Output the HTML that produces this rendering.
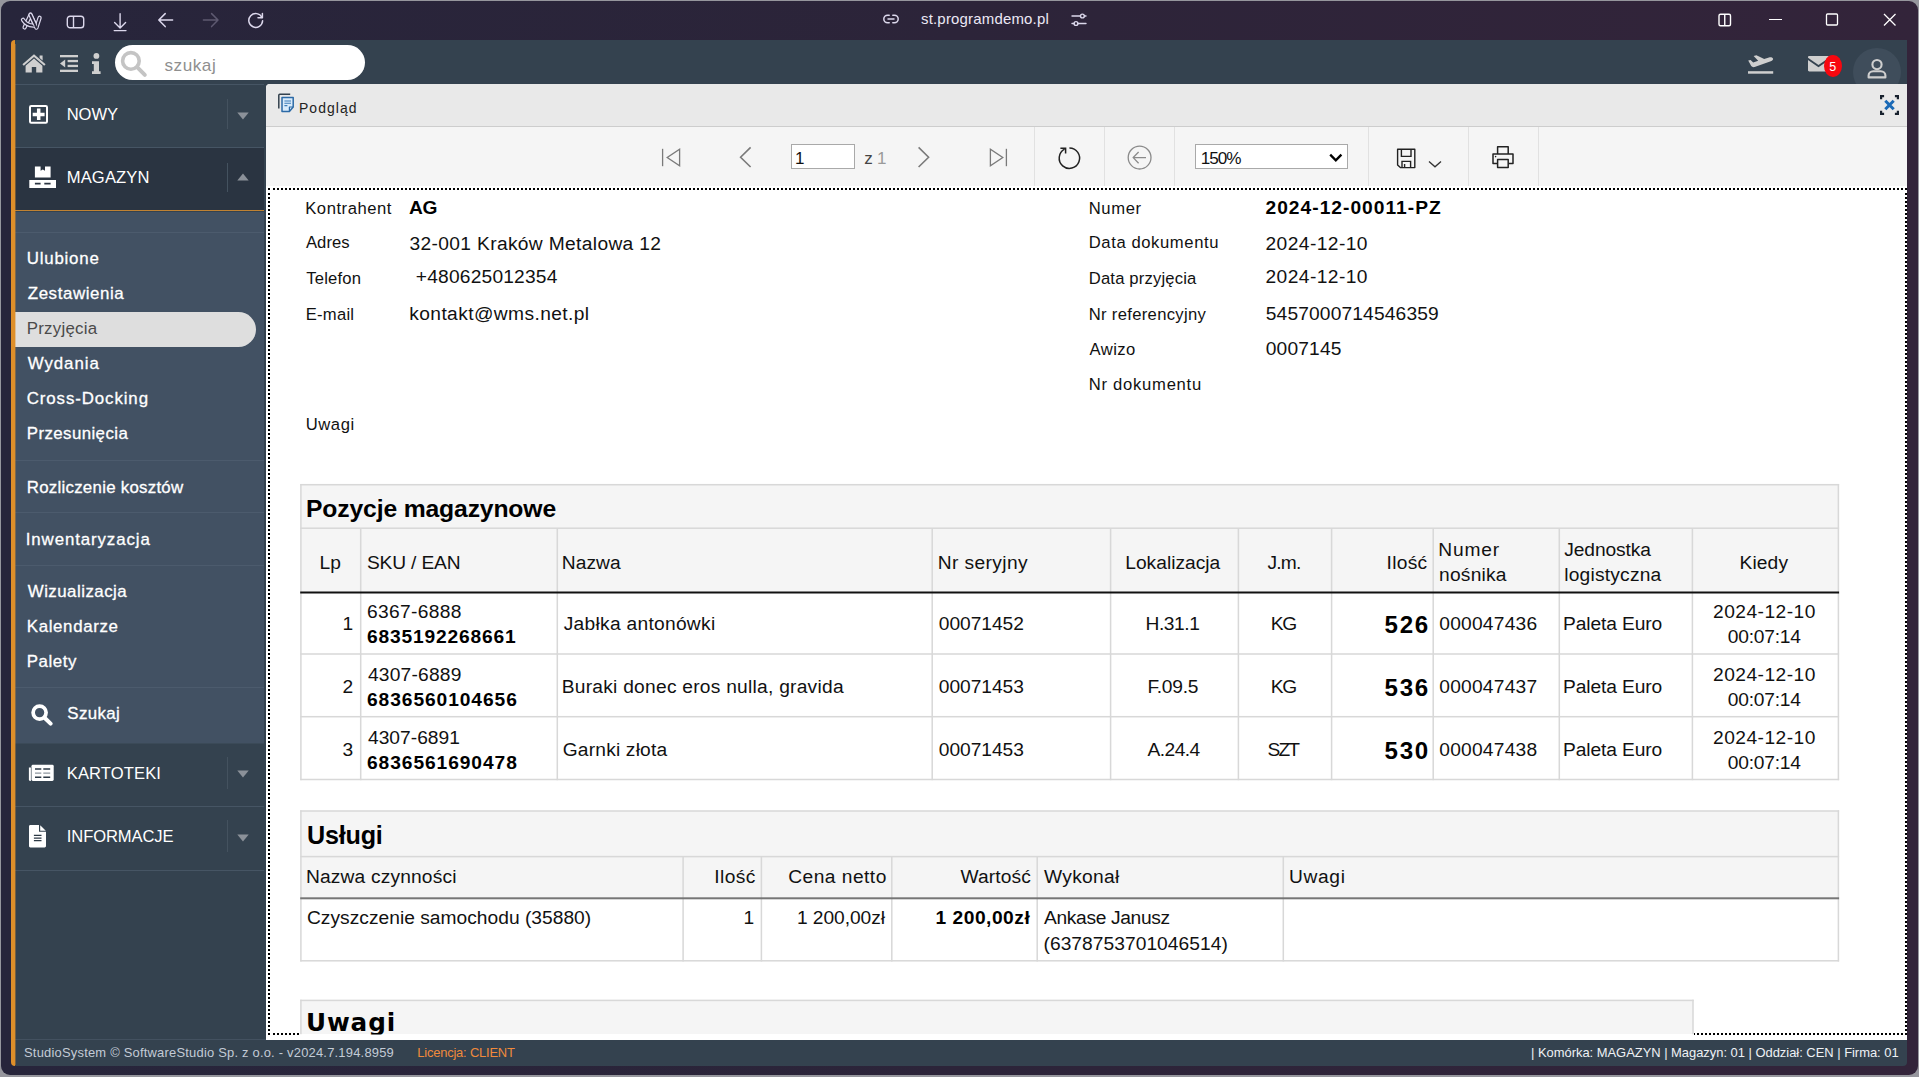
<!DOCTYPE html>
<html lang="pl"><head><meta charset="utf-8"><title>StudioSystem - Podgląd</title>
<style>
html,body{margin:0;padding:0;}
body{width:1919px;height:1077px;position:relative;overflow:hidden;background:#96969d;font-family:'Liberation Sans', sans-serif;}
body>div,body>span,body>svg{position:absolute;}
body>span{white-space:pre;line-height:1;color:#000;}

</style></head><body>
<div style="left:1px;top:1px;width:1917px;height:1074.4px;background:linear-gradient(90deg,#27253b 0%,#2c2439 50%,#33243a 100%);border-radius:9px;"></div>
<div style="left:11px;top:40px;width:1896px;height:1026px;background:#34424f;border-radius:5px 0 4px 5px;overflow:hidden;"></div>
<div style="left:11px;top:40px;width:4px;height:1026px;background:#de8f2a;border-radius:5px 0 0 5px;"></div>
<svg style="left:18px;top:10px;" width="26" height="23" viewBox="0 0 26 23"><g fill="none" stroke-linecap="round" stroke-linejoin="round"><path d="M6.6 17.4 L12.5 4.8 L18.4 17.6 L21.6 7.8" stroke="#dcd8ec" stroke-width="4.3"/><path d="M6.6 17.4 L12.5 4.8 L18.4 17.6 L21.6 7.8" stroke="#28253a" stroke-width="1.9"/><path d="M5 9.8 Q9 16.2 17 15.4" stroke="#dcd8ec" stroke-width="4.3"/><path d="M5 9.8 Q9 16.2 17 15.4" stroke="#28253a" stroke-width="1.9"/><path d="M12.5 4.8 L16.6 13.8" stroke="#dcd8ec" stroke-width="4.3"/><path d="M12.5 4.8 L18.4 17.6" stroke="#28253a" stroke-width="1.9"/></g></svg>
<svg style="left:65px;top:13px;" width="22" height="18" viewBox="0 0 22 18"><g fill="none" stroke="#dcd8ec" stroke-width="1.4"><rect x="2.3" y="3.2" width="16.4" height="11.6" rx="2.8"/><path d="M8.5 3.2v11.6"/></g></svg>
<svg style="left:112px;top:11px;" width="16" height="22" viewBox="0 0 16 22"><g fill="none" stroke="#dcd8ec" stroke-width="1.4" stroke-linecap="round" stroke-linejoin="round"><path d="M8.1 2.8v13.6M2.6 11.6l5.5 5.5 5.5-5.5"/><path d="M2.2 19.6h11.8"/></g></svg>
<svg style="left:156px;top:11px;" width="20" height="18" viewBox="0 0 20 18"><g fill="none" stroke="#dcd8ec" stroke-width="1.5" stroke-linecap="round" stroke-linejoin="round"><path d="M3 9h13.6M9.2 2.6L2.8 9l6.4 6.6"/></g></svg>
<svg style="left:201px;top:11px;" width="20" height="18" viewBox="0 0 20 18"><g fill="none" stroke="#5d5970" stroke-width="1.5" stroke-linecap="round" stroke-linejoin="round"><path d="M2.4 9h14M10.6 2.6L17 9l-6.4 6.6"/></g></svg>
<svg style="left:246px;top:11px;" width="20" height="20" viewBox="0 0 20 20"><g fill="none" stroke="#dcd8ec" stroke-width="1.5" stroke-linecap="round" stroke-linejoin="round"><path d="M15.9 6.4A6.9 6.9 0 1 0 16.6 9.8"/><path d="M16.4 2.4v4.4H12"/></g></svg>
<svg style="left:882px;top:12px;" width="18" height="14" viewBox="0 0 18 14"><g fill="none" stroke="#dcd8ec" stroke-width="1.5" stroke-linecap="round"><path d="M7.2 3.2H5.6a3.8 3.8 0 0 0 0 7.6h1.6M10.8 3.2h1.6a3.8 3.8 0 0 1 0 7.6h-1.6M6 7h6"/></g></svg>
<span style="left:921.00px;top:12px;font-size:14.97px;letter-spacing:0.188px;color:#ebe8f5;">st.programdemo.pl</span>
<svg style="left:1070px;top:11px;" width="18" height="18" viewBox="0 0 18 18"><g fill="none" stroke="#dcd8ec" stroke-width="1.4" stroke-linecap="round"><path d="M2 5h8.5M14.5 5H16M2 12.5h2M8 12.5h8"/><circle cx="12.4" cy="5" r="1.9"/><circle cx="6" cy="12.5" r="1.9"/></g></svg>
<svg style="left:1717px;top:12px;" width="16" height="16" viewBox="0 0 16 16"><g fill="none" stroke="#fff" stroke-width="1.4"><rect x="2" y="2.2" width="11.5" height="11.5" rx="1.5"/><path d="M7.75 2.2v11.5"/></g></svg>
<div style="left:1769px;top:19px;width:13px;height:1.3px;background:#fff;"></div>
<svg style="left:1824px;top:12px;" width="16" height="16" viewBox="0 0 16 16"><rect x="2.5" y="2" width="11" height="11" rx="1" fill="none" stroke="#fff" stroke-width="1.3"/></svg>
<svg style="left:1882px;top:12px;" width="16" height="16" viewBox="0 0 16 16"><path d="M2 2l11.5 11.5M13.5 2L2 13.5" fill="none" stroke="#fff" stroke-width="1.3"/></svg>
<svg style="left:21px;top:52px;" width="26" height="22" viewBox="0 0 26 22"><g fill="#cfcfcf"><path d="M13 2.2 L24.6 12.2 L23.2 13.8 L13 5 L2.8 13.8 L1.4 12.2 Z"/><path d="M18.6 3.4h3v5.2l-3-2.6z"/><path d="M13 6.6 L21.4 13.8 V20.6 H15.2 V15 H10.8 V20.6 H4.6 V13.8 Z"/></g></svg>
<svg style="left:59px;top:54px;" width="20" height="19" viewBox="0 0 20 19"><g fill="#cfcfcf"><rect x="1" y="1" width="18" height="2.3"/><rect x="8.6" y="5.9" width="10.4" height="2.3"/><rect x="8.6" y="10.8" width="10.4" height="2.3"/><rect x="1" y="15.7" width="18" height="2.3"/><path d="M6.2 5.4v8.2L1 9.5z"/></g></svg>
<svg style="left:91px;top:52px;" width="10" height="23" viewBox="0 0 10 23"><g fill="#cfcfcf"><circle cx="5.4" cy="3.9" r="2.9"/><path d="M1 9.2h7v10h1.6v2.8H1v-2.8h1.8V12H1z"/></g></svg>
<div style="left:115px;top:45px;width:250px;height:35px;background:#fff;border-radius:17.5px;"></div>
<svg style="left:120px;top:50px;" width="30" height="30" viewBox="0 0 30 30"><g fill="none" stroke="#c4c4c4"><circle cx="10.9" cy="10.9" r="8.3" stroke-width="3.6"/><path d="M17.4 17.4l7.4 7.4" stroke-width="4" stroke-linecap="round"/></g></svg>
<span style="left:164.50px;top:57px;font-size:17.15px;letter-spacing:0.520px;color:#8f8f8f;">szukaj</span>
<svg style="left:1746px;top:53px;" width="30" height="24" viewBox="0 0 30 24"><g fill="#cfcfcf"><path d="M2.2 7.6 L4.6 6.9 L7.2 9.4 L12.2 7.8 L7.6 3 L10.4 2.2 L18.2 6 L23 4.4 C24.6 3.9 26.4 4.3 27 5.4 C27.5 6.4 26.4 7.6 24.8 8.2 L8.6 14 C7.2 14.4 6 14 5.2 13 Z"/><rect x="2" y="18.2" width="25.2" height="2.5"/></g></svg>
<svg style="left:1807px;top:55px;" width="24" height="18" viewBox="0 0 24 18"><g fill="#cfcfcf"><path d="M1 2.2C1 1.5 1.6 1 2.3 1h18.4c.7 0 1.3.5 1.3 1.2v.6L11.5 10 1 2.8z"/><path d="M1 5l10.5 7.2L22 5v10.3c0 .7-.6 1.2-1.3 1.2H2.3c-.7 0-1.3-.5-1.3-1.2z"/></g></svg>
<div style="left:1824.4px;top:55px;width:17.6px;height:22.2px;background:#f8070f;border-radius:8.8px/11.1px;"></div>
<span style="left:1829.25px;top:61px;font-size:12.5px;color:#fff;">5</span>
<div style="left:1853px;top:48px;width:48px;height:48px;background:#3f4d5b;border-radius:24px;clip-path:inset(0 0 12px 0);"></div>
<svg style="left:1865px;top:57px;" width="24" height="24" viewBox="0 0 24 24"><g fill="none" stroke="#cfcfcf" stroke-width="2.1"><circle cx="12" cy="7.6" r="4.6"/><path d="M3.6 20.4v-1.8c0-2.6 2-4.4 4.6-4.4h7.6c2.6 0 4.6 1.8 4.6 4.4v1.8z" stroke-linejoin="round"/></g></svg>
<div style="left:15px;top:84.3px;width:249.3px;height:1px;background:#465564;"></div>
<div style="left:15px;top:147px;width:249.3px;height:1px;background:#465564;"></div>
<div style="left:15px;top:148px;width:249.3px;height:62.5px;background:#2a3441;"></div>
<div style="left:15px;top:210px;width:249.3px;height:1.2px;background:#c08233;"></div>
<div style="left:15px;top:211.6px;width:249.3px;height:531.6px;background:#425163;"></div>
<div style="left:15px;top:231.5px;width:249.3px;height:1.2px;background:#4c5b6d;"></div>
<div style="left:15px;top:459.5px;width:249.3px;height:1.2px;background:#4c5b6d;"></div>
<div style="left:15px;top:511.5px;width:249.3px;height:1.2px;background:#4c5b6d;"></div>
<div style="left:15px;top:564.5px;width:249.3px;height:1.2px;background:#4c5b6d;"></div>
<div style="left:15px;top:686.5px;width:249.3px;height:1.2px;background:#4c5b6d;"></div>
<div style="left:15px;top:743.2px;width:249.3px;height:1px;background:#3b4a58;"></div>
<div style="left:15px;top:806.4px;width:249.3px;height:1px;background:#465564;"></div>
<div style="left:15px;top:869.6px;width:249.3px;height:1px;background:#465564;"></div>
<div style="left:227.3px;top:98.5px;width:1px;height:30.0px;background:#44525f;"></div>
<div style="left:227.3px;top:162.5px;width:1px;height:29.5px;background:#44525f;"></div>
<div style="left:227.3px;top:757px;width:1px;height:32px;background:#44525f;"></div>
<div style="left:227.3px;top:820px;width:1px;height:32px;background:#44525f;"></div>
<svg style="left:236.5px;top:111.6px;" width="12" height="8" viewBox="0 0 12 8"><path d="M0.3 0.4h11.4L6 7.6z" fill="#8b9199"/></svg>
<svg style="left:236.5px;top:172.7px;" width="12" height="8" viewBox="0 0 12 8"><path d="M0.3 7.6h11.4L6 0.4z" fill="#8b9199"/></svg>
<svg style="left:236.5px;top:770.4px;" width="12" height="8" viewBox="0 0 12 8"><path d="M0.3 0.4h11.4L6 7.6z" fill="#8b9199"/></svg>
<svg style="left:236.5px;top:833.6px;" width="12" height="8" viewBox="0 0 12 8"><path d="M0.3 0.4h11.4L6 7.6z" fill="#8b9199"/></svg>
<svg style="left:28px;top:104px;" width="22" height="21" viewBox="0 0 22 21"><g fill="none" stroke="#fff"><rect x="2" y="2" width="17" height="16.8" rx="1.2" stroke-width="2"/><path d="M10.7 4.5v11.4M4.7 10.4h11.9" stroke-width="3.5"/></g></svg>
<span style="left:66.75px;top:107px;font-size:16.57px;letter-spacing:-0.100px;color:#fff;">NOWY</span>
<svg style="left:28px;top:164px;" width="29" height="25" viewBox="0 0 29 25"><g fill="#fff"><path d="M6.9 2.5h5.7v4.2l2.2-1.2 2.2 1.2V2.5h5.6v11.1H6.9z"/><path d="M1.3 16h26.7v7.9H1.3zM6.9 18.7v1.9h5.7v-1.9zM16.3 18.7v1.9h6.3v-1.9z" fill-rule="evenodd"/></g></svg>
<span style="left:66.75px;top:170px;font-size:16.57px;letter-spacing:0.133px;color:#fff;">MAGAZYN</span>
<span style="left:26.75px;top:251px;font-size:16.86px;letter-spacing:0.786px;color:#fff;-webkit-text-stroke:0.3px #fff;">Ulubione</span>
<span style="left:27.75px;top:286px;font-size:16.86px;letter-spacing:0.600px;color:#fff;-webkit-text-stroke:0.3px #fff;">Zestawienia</span>
<div style="left:15px;top:311.8px;width:241px;height:35px;background:#dedede;border-radius:0 17.5px 17.5px 0;"></div>
<span style="left:26.75px;top:321px;font-size:16.86px;letter-spacing:0.250px;color:#4a4a4a;">Przyjęcia</span>
<span style="left:27.75px;top:356px;font-size:16.86px;letter-spacing:0.933px;color:#fff;-webkit-text-stroke:0.3px #fff;">Wydania</span>
<span style="left:26.75px;top:391px;font-size:16.86px;letter-spacing:0.892px;color:#fff;-webkit-text-stroke:0.3px #fff;">Cross-Docking</span>
<span style="left:26.75px;top:426px;font-size:16.86px;letter-spacing:0.409px;color:#fff;-webkit-text-stroke:0.3px #fff;">Przesunięcia</span>
<span style="left:26.75px;top:480px;font-size:16.86px;letter-spacing:0.256px;color:#fff;-webkit-text-stroke:0.3px #fff;">Rozliczenie kosztów</span>
<span style="left:25.75px;top:532px;font-size:16.86px;letter-spacing:0.892px;color:#fff;-webkit-text-stroke:0.3px #fff;">Inwentaryzacja</span>
<span style="left:27.75px;top:584px;font-size:16.86px;letter-spacing:0.473px;color:#fff;-webkit-text-stroke:0.3px #fff;">Wizualizacja</span>
<span style="left:26.75px;top:619px;font-size:16.86px;letter-spacing:0.656px;color:#fff;-webkit-text-stroke:0.3px #fff;">Kalendarze</span>
<span style="left:26.75px;top:654px;font-size:16.86px;letter-spacing:0.580px;color:#fff;-webkit-text-stroke:0.3px #fff;">Palety</span>
<svg style="left:30px;top:703px;" width="24" height="23" viewBox="0 0 24 23"><g fill="none" stroke="#fff"><circle cx="9.6" cy="9.6" r="6.5" stroke-width="3.7"/><path d="M14.8 15l5.8 5.6" stroke-width="4" stroke-linecap="round"/></g></svg>
<span style="left:67.25px;top:706px;font-size:16.86px;letter-spacing:0.400px;color:#fff;-webkit-text-stroke:0.3px #fff;">Szukaj</span>
<svg style="left:28px;top:764px;" width="27" height="18" viewBox="0 0 27 18"><g fill="#fff"><path d="M0.9 3.4h2v13.6H2.5A1.6 1.6 0 0 1 .9 15.4z"/><rect x="3.5" y="0.8" width="22.2" height="16.2" rx="1.4"/></g><g fill="none"><path d="M7 5h6.3M15.3 5h6.9M7 13.3h6.3M15.3 13.3h6.9" stroke="#2c3945" stroke-width="1.5"/><path d="M7 9.1h6.3M15.3 9.1h6.9" stroke="#8d969f" stroke-width="1.3"/></g></svg>
<span style="left:66.75px;top:766px;font-size:16.57px;letter-spacing:0.113px;color:#fff;">KARTOTEKI</span>
<svg style="left:28px;top:824px;" width="20" height="24" viewBox="0 0 20 24"><g fill="#fff"><path d="M1 2.5C1 1.7 1.6 1.1 2.4 1.1h8.6v6.6h7v14.3c0 .8-.6 1.4-1.4 1.4H2.4c-.8 0-1.4-.6-1.4-1.4z"/><path d="M12.2 1.3l5.6 5.4h-5.6z"/></g><g stroke="#2c3945" stroke-width="1.3"><path d="M5.9 11.3h7.6M5.9 14.1h7.6M5.9 16.7h7.6"/></g></svg>
<span style="left:66.75px;top:829px;font-size:16.57px;letter-spacing:-0.089px;color:#fff;">INFORMACJE</span>
<span style="left:24.00px;top:1047px;font-size:12.94px;letter-spacing:0.210px;color:#c3cbd6;">StudioSystem © SoftwareStudio Sp. z o.o. - v2024.7.194.8959</span>
<span style="left:417.25px;top:1047px;font-size:12.94px;letter-spacing:-0.200px;color:#f08a3c;">Licencja: CLIENT</span>
<span style="left:1531.00px;top:1047px;font-size:12.94px;letter-spacing:-0.017px;color:#eef1f5;">| Komórka: MAGAZYN | Magazyn: 01 | Oddział: CEN | Firma: 01</span>
<div style="left:15px;top:1039.3px;width:1892px;height:1px;background:#435160;"></div>
<div style="left:266.3px;top:84.3px;width:1640.7px;height:955.5px;background:#fff;border-radius:4px 0 0 0;overflow:hidden;"></div>
<div style="left:266.3px;top:84.3px;width:1640.7px;height:41.5px;background:#e9e9e9;border-radius:4px 0 0 0;"></div>
<div style="left:266.3px;top:125.6px;width:1640.7px;height:1.5px;background:#cdcdcd;"></div>
<div style="left:266.3px;top:127.1px;width:1640.7px;height:59.4px;background:#f5f5f5;"></div>
<svg style="left:276px;top:92px;" width="20" height="22" viewBox="0 0 20 22"><g fill="none" stroke-linejoin="round"><path d="M2.8 16.6V3.2c0-.6.4-1 1-1h10.4" stroke="#33414e" stroke-width="1.5"/><path d="M6 5.6h11.2v9.4l-3.8 4.4H6z" fill="#d9ebfb" stroke="#2c6aa6" stroke-width="1.5"/><path d="M17.2 15h-3.8v4.4" stroke="#2c6aa6" stroke-width="1.2"/><path d="M8.4 9h6.6M8.4 11.2h6.6M8.4 13.6h3" stroke="#3f7db8" stroke-width="1.1"/></g></svg>
<span style="left:299.00px;top:102px;font-size:13.95px;letter-spacing:1.067px;color:#222;">Podgląd</span>
<svg style="left:1879px;top:94px;" width="22" height="22" viewBox="0 0 22 22"><g fill="none" stroke="#17212d" stroke-width="2.2"><path d="M2.1 5.2v-3h3M15.9 2.2h3v3M18.9 16.8v3h-3M5.1 19.8h-3v-3"/></g><path d="M6.3 6.8l8.4 8.4M14.7 6.8l-8.4 8.4" stroke="#1a69b6" stroke-width="3" fill="none"/></svg>
<div style="left:1033.8px;top:127.1px;width:1px;height:59.4px;background:#e1e1e1;"></div>
<div style="left:1103.8px;top:127.1px;width:1px;height:59.4px;background:#e1e1e1;"></div>
<div style="left:1173.8px;top:127.1px;width:1px;height:59.4px;background:#e1e1e1;"></div>
<div style="left:1367.7px;top:127.1px;width:1px;height:59.4px;background:#e1e1e1;"></div>
<div style="left:1467.5px;top:127.1px;width:1px;height:59.4px;background:#e1e1e1;"></div>
<div style="left:1537.5px;top:127.1px;width:1px;height:59.4px;background:#e1e1e1;"></div>
<svg style="left:660px;top:146px;" width="24" height="24" viewBox="0 0 24 24"><g fill="none" stroke="#7a7a7a" stroke-width="1.3"><path d="M2.6 2.8v17.4"/><path d="M19.6 3.2v16.6L7.2 11.5z" stroke-linejoin="miter"/></g></svg>
<svg style="left:736px;top:145px;" width="18" height="24" viewBox="0 0 18 24"><path d="M14.6 2.4L4.6 12.2l10 9.8" fill="none" stroke="#7a7a7a" stroke-width="1.6"/></svg>
<div style="left:791px;top:144.3px;width:63.5px;height:25.2px;box-sizing:border-box;background:#fff;border:1px solid #a9a9a9;"></div>
<span style="left:795.00px;top:150px;font-size:17.01px;color:#111;">1</span>
<span style="left:864.25px;top:150px;font-size:17.01px;color:#444;">z</span>
<span style="left:877.00px;top:150px;font-size:17.01px;color:#9a9a9a;">1</span>
<svg style="left:915px;top:145px;" width="18" height="24" viewBox="0 0 18 24"><path d="M3.6 2.4l10 9.8-10 9.8" fill="none" stroke="#7a7a7a" stroke-width="1.6"/></svg>
<svg style="left:987px;top:146px;" width="24" height="24" viewBox="0 0 24 24"><g fill="none" stroke="#7a7a7a" stroke-width="1.3"><path d="M19.4 2.8v17.4"/><path d="M3.4 3.2v16.6l12.4-8.3z"/></g></svg>
<svg style="left:1055px;top:144px;" width="28" height="28" viewBox="0 0 28 28"><g fill="none" stroke="#222" stroke-width="1.5"><path d="M9.6 5.2A10.2 10.2 0 1 0 14.4 4"/><path d="M5.4 4.2h5.2v5.2" stroke-linejoin="miter"/></g></svg>
<svg style="left:1126px;top:144px;" width="28" height="28" viewBox="0 0 28 28"><g fill="none" stroke="#8a8a8a" stroke-width="1.3"><circle cx="13.6" cy="13.6" r="11.4"/><path d="M20 13.6H7.6M12.6 8l-5.4 5.6 5.4 5.6"/></g></svg>
<div style="left:1195px;top:144.3px;width:152.6px;height:25.2px;box-sizing:border-box;background:#fff;border:1px solid #a9a9a9;"></div>
<span style="left:1200.75px;top:150px;font-size:17.15px;letter-spacing:-1.000px;color:#111;">150%</span>
<svg style="left:1328px;top:152px;" width="16" height="12" viewBox="0 0 16 12"><path d="M2.2 2.6l5.6 5.8 5.6-5.8" fill="none" stroke="#000" stroke-width="2.3"/></svg>
<svg style="left:1395px;top:147px;" width="24" height="23" viewBox="0 0 24 23"><g fill="none" stroke="#222" stroke-width="1.4"><path d="M2.6 2.2h17.2v18.4H5.4L2.6 18z" stroke-linejoin="round"/><path d="M6.4 2.4v7h9.6v-7"/><path d="M7 20.4v-6h8.6v6M9.6 20.4v-3.4"/></g></svg>
<svg style="left:1427px;top:159px;" width="16" height="10" viewBox="0 0 16 10"><path d="M2 2.4l6 5.4 6-5.4" fill="none" stroke="#333" stroke-width="1.3"/></svg>
<svg style="left:1490px;top:144px;" width="26" height="26" viewBox="0 0 26 26"><g fill="none" stroke="#222" stroke-width="1.5" stroke-linejoin="round"><path d="M7.6 10V2.8h10.6V10"/><path d="M7.4 19.4H3V10h20v9.4h-4.6"/><path d="M7.6 15.4h10.6v8H7.6z"/></g><circle cx="5.6" cy="12.6" r="0.8" fill="#222"/></svg>
<div style="left:268px;top:188px;width:1639px;height:847px;box-sizing:border-box;border:2px dotted #000;background:#fff;"></div>
<span style="left:305.25px;top:201px;font-size:16.64px;letter-spacing:0.533px;color:#111;">Kontrahent</span>
<span style="left:306.00px;top:235px;font-size:16.64px;letter-spacing:0.025px;color:#111;">Adres</span>
<span style="left:306.25px;top:271px;font-size:16.64px;letter-spacing:0.200px;color:#111;">Telefon</span>
<span style="left:305.75px;top:307px;font-size:16.64px;letter-spacing:0.240px;color:#111;">E-mail</span>
<span style="left:305.75px;top:417px;font-size:16.64px;letter-spacing:0.550px;color:#111;">Uwagi</span>
<span style="left:409.00px;top:198px;font-size:19.19px;letter-spacing:-0.300px;font-weight:700;">AG</span>
<span style="left:409.50px;top:234px;font-size:19.19px;letter-spacing:0.346px;color:#111;">32-001 Kraków Metalowa 12</span>
<span style="left:415.75px;top:267px;font-size:19.19px;letter-spacing:0.200px;color:#111;">+480625012354</span>
<span style="left:409.25px;top:304px;font-size:19.19px;letter-spacing:0.400px;color:#111;">kontakt@wms.net.pl</span>
<span style="left:1088.75px;top:201px;font-size:16.64px;letter-spacing:0.600px;color:#111;">Numer</span>
<span style="left:1088.75px;top:235px;font-size:16.64px;letter-spacing:0.592px;color:#111;">Data dokumentu</span>
<span style="left:1088.75px;top:271px;font-size:16.64px;letter-spacing:0.169px;color:#111;">Data przyjęcia</span>
<span style="left:1088.75px;top:307px;font-size:16.64px;letter-spacing:0.314px;color:#111;">Nr referencyjny</span>
<span style="left:1089.50px;top:342px;font-size:16.64px;letter-spacing:0.425px;color:#111;">Awizo</span>
<span style="left:1088.75px;top:377px;font-size:16.64px;letter-spacing:0.727px;color:#111;">Nr dokumentu</span>
<span style="left:1265.50px;top:198px;font-size:19.19px;letter-spacing:1.013px;font-weight:700;">2024-12-00011-PZ</span>
<span style="left:1265.50px;top:234px;font-size:19.19px;letter-spacing:0.433px;color:#111;">2024-12-10</span>
<span style="left:1265.50px;top:267px;font-size:19.19px;letter-spacing:0.433px;color:#111;">2024-12-10</span>
<span style="left:1265.75px;top:304px;font-size:19.19px;letter-spacing:0.147px;color:#111;">5457000714546359</span>
<span style="left:1265.75px;top:339px;font-size:19.19px;letter-spacing:0.167px;color:#111;">0007145</span>
<div style="left:300.9px;top:484.5px;width:1537.5px;height:108px;background:#f5f5f5;"></div>
<span style="left:306.00px;top:497px;font-size:24.71px;letter-spacing:-0.147px;font-weight:700;">Pozycje magazynowe</span>
<span style="left:319.50px;top:553px;font-size:19.19px;color:#111;">Lp</span>
<span style="left:367.00px;top:553px;font-size:19.19px;letter-spacing:-0.175px;color:#111;">SKU / EAN</span>
<span style="left:561.75px;top:553px;font-size:19.19px;letter-spacing:0.050px;color:#111;">Nazwa</span>
<span style="left:937.75px;top:553px;font-size:19.19px;letter-spacing:0.389px;color:#111;">Nr seryjny</span>
<span style="left:1125.25px;top:553px;font-size:19.19px;letter-spacing:0.010px;color:#111;">Lokalizacja</span>
<span style="left:1267.50px;top:553px;font-size:19.19px;letter-spacing:-0.800px;color:#111;">J.m.</span>
<span style="left:1386.50px;top:553px;font-size:19.19px;letter-spacing:0.300px;color:#111;">Ilość</span>
<span style="left:1438.25px;top:540px;font-size:19.19px;letter-spacing:0.800px;color:#111;">Numer</span>
<span style="left:1439.00px;top:565px;font-size:19.19px;letter-spacing:0.233px;color:#111;">nośnika</span>
<span style="left:1564.25px;top:540px;font-size:19.19px;letter-spacing:-0.088px;color:#111;">Jednostka</span>
<span style="left:1564.25px;top:565px;font-size:19.19px;letter-spacing:0.210px;color:#111;">logistyczna</span>
<span style="left:1739.50px;top:553px;font-size:19.19px;letter-spacing:0.125px;color:#111;">Kiedy</span>
<span style="left:342.50px;top:614px;font-size:19.19px;color:#111;">1</span>
<span style="left:367.00px;top:602px;font-size:19.19px;letter-spacing:0.325px;color:#111;">6367-6888</span>
<span style="left:367.00px;top:627px;font-size:19.19px;letter-spacing:0.825px;font-weight:700;">6835192268661</span>
<span style="left:563.75px;top:614px;font-size:19.19px;letter-spacing:0.280px;color:#111;">Jabłka antonówki</span>
<span style="left:938.75px;top:614px;font-size:19.19px;letter-spacing:-0.029px;color:#111;">00071452</span>
<span style="left:1145.50px;top:614px;font-size:19.19px;letter-spacing:-0.420px;color:#111;">H.31.1</span>
<span style="left:1270.75px;top:614px;font-size:19.19px;letter-spacing:-1.300px;color:#111;">KG</span>
<span style="left:1384.50px;top:613px;font-size:24.13px;letter-spacing:1.750px;font-weight:700;">526</span>
<span style="left:1439.25px;top:614px;font-size:19.19px;letter-spacing:0.225px;color:#111;">000047436</span>
<span style="left:1563.00px;top:614px;font-size:19.19px;letter-spacing:-0.110px;color:#111;">Paleta Euro</span>
<span style="left:1713.00px;top:602px;font-size:19.19px;letter-spacing:0.467px;color:#111;">2024-12-10</span>
<span style="left:1727.75px;top:627px;font-size:19.19px;letter-spacing:-0.214px;color:#111;">00:07:14</span>
<span style="left:342.50px;top:677px;font-size:19.19px;color:#111;">2</span>
<span style="left:368.00px;top:665px;font-size:19.19px;letter-spacing:0.200px;color:#111;">4307-6889</span>
<span style="left:367.00px;top:690px;font-size:19.19px;letter-spacing:0.925px;font-weight:700;">6836560104656</span>
<span style="left:561.75px;top:677px;font-size:19.19px;letter-spacing:0.248px;color:#111;">Buraki donec eros nulla, gravida</span>
<span style="left:938.75px;top:677px;font-size:19.19px;letter-spacing:-0.029px;color:#111;">00071453</span>
<span style="left:1147.50px;top:677px;font-size:19.19px;letter-spacing:-0.280px;color:#111;">F.09.5</span>
<span style="left:1270.75px;top:677px;font-size:19.19px;letter-spacing:-1.300px;color:#111;">KG</span>
<span style="left:1384.50px;top:676px;font-size:24.13px;letter-spacing:1.750px;font-weight:700;">536</span>
<span style="left:1439.25px;top:677px;font-size:19.19px;letter-spacing:0.225px;color:#111;">000047437</span>
<span style="left:1563.00px;top:677px;font-size:19.19px;letter-spacing:-0.110px;color:#111;">Paleta Euro</span>
<span style="left:1713.00px;top:665px;font-size:19.19px;letter-spacing:0.467px;color:#111;">2024-12-10</span>
<span style="left:1727.75px;top:690px;font-size:19.19px;letter-spacing:-0.214px;color:#111;">00:07:14</span>
<span style="left:342.50px;top:740px;font-size:19.19px;color:#111;">3</span>
<span style="left:368.00px;top:728px;font-size:19.19px;letter-spacing:0.013px;color:#111;">4307-6891</span>
<span style="left:367.00px;top:753px;font-size:19.19px;letter-spacing:0.925px;font-weight:700;">6836561690478</span>
<span style="left:562.75px;top:740px;font-size:19.19px;letter-spacing:0.182px;color:#111;">Garnki złota</span>
<span style="left:938.75px;top:740px;font-size:19.19px;letter-spacing:-0.029px;color:#111;">00071453</span>
<span style="left:1147.50px;top:740px;font-size:19.19px;letter-spacing:-0.540px;color:#111;">A.24.4</span>
<span style="left:1267.50px;top:740px;font-size:19.19px;letter-spacing:-1.850px;color:#111;">SZT</span>
<span style="left:1384.50px;top:739px;font-size:24.13px;letter-spacing:1.750px;font-weight:700;">530</span>
<span style="left:1439.25px;top:740px;font-size:19.19px;letter-spacing:0.225px;color:#111;">000047438</span>
<span style="left:1563.00px;top:740px;font-size:19.19px;letter-spacing:-0.110px;color:#111;">Paleta Euro</span>
<span style="left:1713.00px;top:728px;font-size:19.19px;letter-spacing:0.467px;color:#111;">2024-12-10</span>
<span style="left:1727.75px;top:753px;font-size:19.19px;letter-spacing:-0.214px;color:#111;">00:07:14</span>
<div style="left:300.9px;top:811px;width:1537.5px;height:87.3px;background:#f5f5f5;"></div>
<span style="left:307.00px;top:823px;font-size:25.15px;letter-spacing:-0.200px;font-weight:700;">Usługi</span>
<span style="left:306.00px;top:867px;font-size:19.19px;letter-spacing:0.157px;color:#111;">Nazwa czynności</span>
<span style="left:714.25px;top:867px;font-size:19.19px;letter-spacing:0.400px;color:#111;">Ilość</span>
<span style="left:788.25px;top:867px;font-size:19.19px;letter-spacing:0.467px;color:#111;">Cena netto</span>
<span style="left:960.50px;top:867px;font-size:19.19px;letter-spacing:0.117px;color:#111;">Wartość</span>
<span style="left:1044.00px;top:867px;font-size:19.19px;letter-spacing:0.317px;color:#111;">Wykonał</span>
<span style="left:1289.00px;top:867px;font-size:19.19px;letter-spacing:0.650px;color:#111;">Uwagi</span>
<span style="left:307.00px;top:908px;font-size:19.19px;letter-spacing:0.018px;color:#111;">Czyszczenie samochodu (35880)</span>
<span style="left:743.50px;top:908px;font-size:19.19px;color:#111;">1</span>
<span style="left:797.00px;top:908px;font-size:19.19px;letter-spacing:-0.067px;color:#111;">1 200,00zł</span>
<span style="left:935.50px;top:908px;font-size:19.19px;letter-spacing:0.511px;font-weight:700;">1 200,00zł</span>
<span style="left:1044.00px;top:908px;font-size:19.19px;letter-spacing:-0.333px;color:#111;">Ankase Janusz</span>
<span style="left:1043.50px;top:934px;font-size:19.19px;letter-spacing:0.047px;color:#111;">(6378753701046514)</span>
<div style="left:300.2px;top:999.6px;width:1393.5px;height:35.4px;background:#fff;"></div>
<div style="left:300.9px;top:1000px;width:1392.1px;height:34.2px;background:#f5f5f5;"></div>
<span style="left:306.00px;top:1011px;font-size:24.69px;letter-spacing:0.875px;font-weight:700;font-family:'DejaVu Sans', sans-serif;clip-path:inset(0 0 1.2px 0);">Uwagi</span>
<div style="left:15.5px;top:1039.6px;width:1891.5px;height:0.1px;background:#34424f;"></div>
<svg style="left:0;top:0;pointer-events:none" width="1919" height="1077" viewBox="0 0 1919 1077"><rect x="300.20" y="483.95" width="1538.90" height="1.5" fill="#d8d8d8"/><rect x="300.20" y="527.45" width="1538.90" height="1.5" fill="#d8d8d8"/><rect x="300.20" y="653.25" width="1538.90" height="1.5" fill="#d8d8d8"/><rect x="300.20" y="715.95" width="1538.90" height="1.5" fill="#d8d8d8"/><rect x="300.20" y="778.75" width="1538.90" height="1.5" fill="#d8d8d8"/><rect x="300.15" y="484.00" width="1.5" height="296.20" fill="#d8d8d8"/><rect x="1837.65" y="484.00" width="1.5" height="296.20" fill="#d8d8d8"/><rect x="359.95" y="528.20" width="1.5" height="252.00" fill="#d8d8d8"/><rect x="556.55" y="528.20" width="1.5" height="252.00" fill="#d8d8d8"/><rect x="931.45" y="528.20" width="1.5" height="252.00" fill="#d8d8d8"/><rect x="1109.85" y="528.20" width="1.5" height="252.00" fill="#d8d8d8"/><rect x="1237.65" y="528.20" width="1.5" height="252.00" fill="#d8d8d8"/><rect x="1330.85" y="528.20" width="1.5" height="252.00" fill="#d8d8d8"/><rect x="1432.45" y="528.20" width="1.5" height="252.00" fill="#d8d8d8"/><rect x="1558.55" y="528.20" width="1.5" height="252.00" fill="#d8d8d8"/><rect x="1691.65" y="528.20" width="1.5" height="252.00" fill="#d8d8d8"/><rect x="300.20" y="591.50" width="1538.90" height="2" fill="#111"/><rect x="300.20" y="810.25" width="1538.90" height="1.5" fill="#d8d8d8"/><rect x="300.20" y="855.85" width="1538.90" height="1.5" fill="#d8d8d8"/><rect x="300.20" y="960.05" width="1538.90" height="1.5" fill="#d8d8d8"/><rect x="300.15" y="810.30" width="1.5" height="151.20" fill="#d8d8d8"/><rect x="1837.65" y="810.30" width="1.5" height="151.20" fill="#d8d8d8"/><rect x="682.35" y="856.60" width="1.5" height="104.90" fill="#d8d8d8"/><rect x="760.65" y="856.60" width="1.5" height="104.90" fill="#d8d8d8"/><rect x="891.05" y="856.60" width="1.5" height="104.90" fill="#d8d8d8"/><rect x="1036.45" y="856.60" width="1.5" height="104.90" fill="#d8d8d8"/><rect x="1282.55" y="856.60" width="1.5" height="104.90" fill="#d8d8d8"/><rect x="300.20" y="897.30" width="1538.90" height="2" fill="#767676"/><rect x="300.20" y="999.65" width="1393.50" height="1.5" fill="#d8d8d8"/><rect x="300.15" y="999.70" width="1.5" height="34.50" fill="#d8d8d8"/><rect x="1692.25" y="999.70" width="1.5" height="34.50" fill="#d8d8d8"/></svg>
<div style="left:15px;top:44px;width:1px;height:1021px;background:rgba(222,143,42,0.4);"></div>
</body></html>
